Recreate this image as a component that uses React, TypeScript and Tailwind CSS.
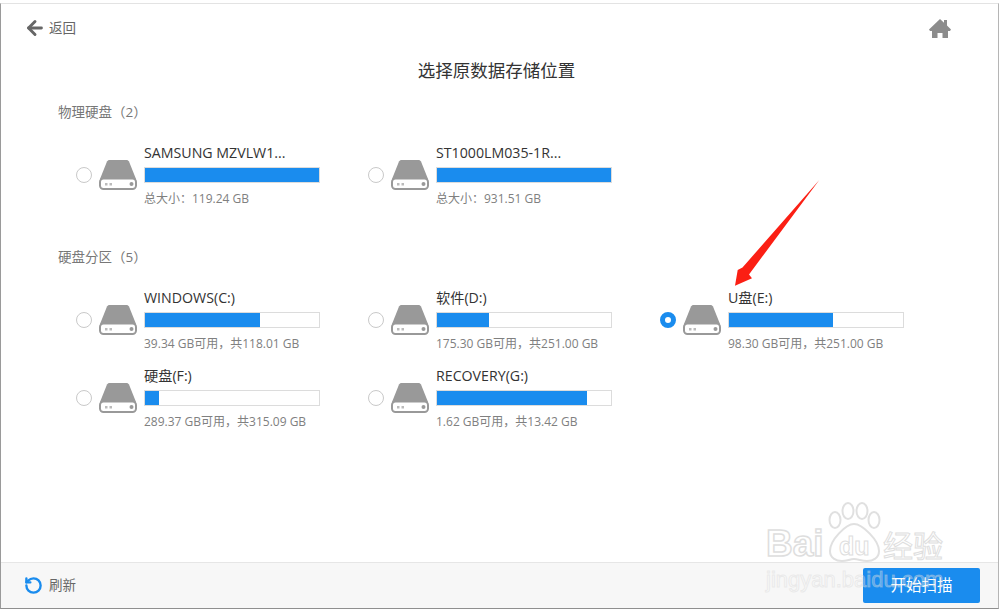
import { ArrowLeft, RotateCcw } from 'lucide-react';

type Disk = {
  name: string;
  info: string;
  used: number;
  selected?: boolean;
};

const physical: Disk[] = [
  { name: 'SAMSUNG MZVLW1...', info: '总大小：119.24 GB', used: 100 },
  { name: 'ST1000LM035-1R...', info: '总大小：931.51 GB', used: 100 },
];

const partitions: Disk[] = [
  { name: 'WINDOWS(C:)', info: '39.34 GB可用，共118.01 GB', used: 66 },
  { name: '软件(D:)', info: '175.30 GB可用，共251.00 GB', used: 30 },
  { name: 'U盘(E:)', info: '98.30 GB可用，共251.00 GB', used: 60, selected: true },
  { name: '硬盘(F:)', info: '289.37 GB可用，共315.09 GB', used: 8 },
  { name: 'RECOVERY(G:)', info: '1.62 GB可用，共13.42 GB', used: 86 },
];

function DriveIcon() {
  return (
    <svg width="38" height="30" viewBox="0 0 38 30" className="shrink-0">
      <path d="M8 1.5C8.5 .6 9.5 0 10.5 0h17c1 0 2 .6 2.500 1.500L37 19H1z" fill="#999999" />
      <rect x="1" y="18.500" width="36" height="10.500" rx="3.500" fill="#ffffff" stroke="#999999" strokeWidth="2" />
      <circle cx="32.500" cy="24" r="2" fill="#999999" />
      <rect x="6" y="23" width="2.500" height="2.500" fill="#bbbbbb" />
      <rect x="10.500" y="23" width="2.500" height="2.500" fill="#bbbbbb" />
    </svg>
  );
}

function HomeIcon() {
  return (
    <svg width="22" height="20" viewBox="0 0 22 20">
      <path
        d="M11 1 15 4.800V2h3v5.600L22 11.500 21 13H19v7h-5.500v-5h-5v5H3v-7H1L0 11.500z"
        fill="#8c8c8c"
      />
    </svg>
  );
}

function DiskItem({ disk }: { disk: Disk }) {
  return (
    <div className="flex items-center h-[78px] w-[292px] pl-[18px]">
      {disk.selected ? (
        <div className="w-4 h-4 rounded-full border-[5px] border-[#1a8cee] bg-white shrink-0 mr-[7px]" />
      ) : (
        <div className="w-4 h-4 rounded-full border border-[#c9c9c9] bg-white shrink-0 mr-[7px]" />
      )}
      <DriveIcon />
      <div className="ml-[7px] w-[176px] pt-[3px] pb-[1px]">
        <div className="text-[14.2px] leading-5 text-[#333333] whitespace-nowrap">{disk.name}</div>
        <div className="h-4 border border-[#dcdcdc] bg-white mt-[4px]">
          <div className="h-full bg-[#1a8cee]" style={{ width: `${disk.used}%` }} />
        </div>
        <div className="text-xs leading-5 text-[#808080] mt-[6px] whitespace-nowrap">{disk.info}</div>
      </div>
    </div>
  );
}

export default function App() {
  return (
    <div
      className="relative w-[1000px] h-[611px] overflow-hidden bg-white pt-[3px] flex flex-col"
      style={{ fontFamily: '"Open Sans", "Noto Sans CJK SC", sans-serif' }}
    >
      <div className="flex-1 flex flex-col min-h-0 mr-[1px] mb-[2px] bg-white border-t border-[#e3e3e3] border-l border-l-[#9a9a9a] border-r border-r-[#b5b5b5] border-b border-b-[#8f8f8f]">
        {/* Header */}
        <div className="flex items-center justify-between pl-[23px] pr-[47px] h-[48px]">
          <div className="flex items-center gap-[3px] text-[#666666]">
            <ArrowLeft size={22} strokeWidth={3.2} color="#666666" />
            <span className="text-[13.5px]">返回</span>
          </div>
          <HomeIcon />
        </div>

        <h1 className="text-[17.5px] leading-6 text-[#333333] text-center mt-[6px] pr-[6px]">选择原数据存储位置</h1>

        <div className="flex-1 pl-[57px] pt-[20px]">
          <div className="text-[13.5px] leading-5 text-[#777777]">物理硬盘（2）</div>
          <div className="flex flex-wrap mt-[14px]">
            {physical.map((d) => (
              <DiskItem key={d.name} disk={d} />
            ))}
          </div>
          <div className="text-[13.5px] leading-5 text-[#777777] mt-[33px]">硬盘分区（5）</div>
          <div className="flex flex-wrap mt-[14px] w-[900px]">
            {partitions.map((d) => (
              <DiskItem key={d.name} disk={d} />
            ))}
          </div>
        </div>

        {/* Footer */}
        <div className="h-[46px] bg-[#f7f7f7] border-t border-[#e6e6e6] flex items-center justify-between pl-[23px] pr-[18px]">
          <div className="flex items-center gap-[6px]">
            <RotateCcw size={19} strokeWidth={3} color="#1a8cee" />
            <span className="text-[13.5px] text-[#666666]">刷新</span>
          </div>
          <button className="w-[117px] h-[35px] bg-[#1a8cee] rounded-[2px] text-white text-[15.5px]">开始扫描</button>
        </div>
      </div>

      {/* Annotation arrow */}
      <svg className="absolute left-[730px] top-[175px]" width="95" height="115" viewBox="0 0 95 115">
        <path d="M89.300 5 19 99.500 22 103.300 5 110.700 7.700 95 12.500 92.500z" fill="#fb1f14" />
      </svg>

      {/* Watermark */}
      <div className="absolute left-[766px] top-[500px] w-[190px] h-[95px] pointer-events-none [font-family:'Liberation_Sans',sans-serif]">
        <span className="absolute left-0 top-[22px] text-white font-bold text-[37px] leading-[44px] [-webkit-text-stroke:1.5px_#dedede]">Bai</span>
        <svg className="absolute left-[60px] top-[2px]" width="58" height="62" viewBox="0 0 58 62" fill="white" stroke="#e0e0e0" strokeWidth="2">
          <ellipse cx="9" cy="18" rx="5.500" ry="8" />
          <ellipse cx="22" cy="9" rx="5.500" ry="8" />
          <ellipse cx="36" cy="9" rx="5.500" ry="8" />
          <ellipse cx="48" cy="18" rx="5.500" ry="8" />
          <path d="M28 22C20 22 4 38 4 49c0 7 6 10 12 10 5 0 8-2 12-2s8 2 13 2c6 0 12-3 12-10 0-11-17-27-25-27z" />
        </svg>
        <span className="absolute left-[73px] top-[31px] text-white font-bold text-[25px] leading-[30px] [-webkit-text-stroke:1px_#dedede]">du</span>
        <span className="absolute left-[117px] top-[26px] text-white text-[30px] leading-[36px] [-webkit-text-stroke:1px_#dedede] [font-family:'Noto_Sans_CJK_SC',sans-serif]">经验</span>
        <span className="absolute left-0 top-[68px] text-[22px] leading-6 whitespace-nowrap text-[#ffffff40] [-webkit-text-stroke:1px_#d4d4d466]">jingyan.baidu.com</span>
      </div>
    </div>
  );
}
